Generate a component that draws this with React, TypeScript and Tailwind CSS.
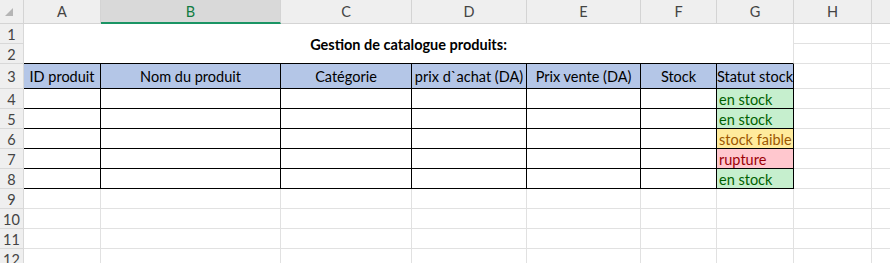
import React from "react";

const COLS = ["A", "B", "C", "D", "E", "F", "G", "H", "I"];
const ROWS = [1, 2, 3, 4, 5, 6, 7, 8, 9, 10, 11, 12];

const HEADERS = [
  "ID produit",
  "Nom du produit",
  "Catégorie",
  "prix d`achat (DA)",
  "Prix vente (DA)",
  "Stock",
  "Statut stock",
];

type Status = "ok" | "low" | "out";

const STATUS: Record<number, { label: string; kind: Status }> = {
  4: { label: "en stock", kind: "ok" },
  5: { label: "en stock", kind: "ok" },
  6: { label: "stock faible", kind: "low" },
  7: { label: "rupture", kind: "out" },
  8: { label: "en stock", kind: "ok" },
};

const statusClass: Record<Status, string> = {
  ok: "bg-[#c6efce] text-[#006100]",
  low: "bg-[#ffeb9c] text-[#9c5700]",
  out: "bg-[#ffc7ce] text-[#9c0006]",
};

function inTable(r: number, c: number) {
  return r >= 3 && r <= 8 && c <= 6;
}

function Cell({ r, c }: { r: number; c: number }) {
  const table = inTable(r, c);
  const borders = table
    ? "border-r border-b border-black"
    : "border-r border-b border-[#e1e1e1]";

  if (r === 3 && table) {
    return (
      <div
        className={`${borders} bg-[#b4c6e7] flex items-end justify-center pb-[4px] text-black whitespace-nowrap overflow-hidden`}
      >
        {HEADERS[c]}
      </div>
    );
  }

  if (c === 6 && STATUS[r]) {
    const s = STATUS[r];
    return (
      <div
        className={`${borders} ${statusClass[s.kind]} flex items-end pl-[2px] pb-[1px] whitespace-nowrap overflow-hidden`}
      >
        {s.label}
      </div>
    );
  }

  return <div className={`${borders} bg-white`} />;
}

function CornerMark() {
  return (
    <div className="bg-[#efefef] border-r border-b border-[#d4d4d4] flex items-end justify-start pl-[5px] pb-[7px]">
      <svg width="8" height="8" viewBox="0 0 8 8">
        <polygon points="8,0 8,8 0,8" fill="#b5b5b5" />
      </svg>
    </div>
  );
}

export default function App() {
  return (
    <div
      className="w-[890px] h-[263px] overflow-hidden bg-white text-[14.5px] leading-none"
      style={{ fontFamily: "Lato, 'Open Sans', sans-serif" }}
    >
      <div className="grid grid-cols-[24px_77px_180px_131px_115px_114px_76px_77px_78px_40px] grid-rows-[24px_20px_20px_25px_20px_20px_20px_20px_20px_20px_20px_20px_20px]">
        {/* column letters */}
        <CornerMark />
        {COLS.map((l, i) =>
          i === 1 ? (
            <div
              key={l}
              className="bg-[#d9d9d9] border-r border-[#d4d4d4] border-b-2 border-b-[#1a9464] flex items-center justify-center pt-[3px] text-[#107c41]"
            >
              {l}
            </div>
          ) : (
            <div
              key={l}
              className="bg-[#efefef] border-r border-b border-[#d4d4d4] flex items-center justify-center pt-[2px] text-[#444444]"
            >
              {l}
            </div>
          )
        )}

        {/* merged title A1:G2 */}
        <div className="col-start-2 col-span-7 row-start-2 row-span-2 bg-white border-r border-r-[#e1e1e1] border-b border-b-black flex items-center justify-center pt-[3px] font-bold text-black">
          Gestion de catalogue produits:
        </div>

        {ROWS.map((r) => (
          <React.Fragment key={r}>
            <div className="bg-[#efefef] border-r border-b border-[#d8d8d8] flex items-center justify-center pt-[3px] text-[#444444]">
              {r}
            </div>
            {COLS.map((_, c) =>
              (r === 1 || r === 2) && c <= 6 ? null : <Cell key={c} r={r} c={c} />
            )}
          </React.Fragment>
        ))}
      </div>
    </div>
  );
}
